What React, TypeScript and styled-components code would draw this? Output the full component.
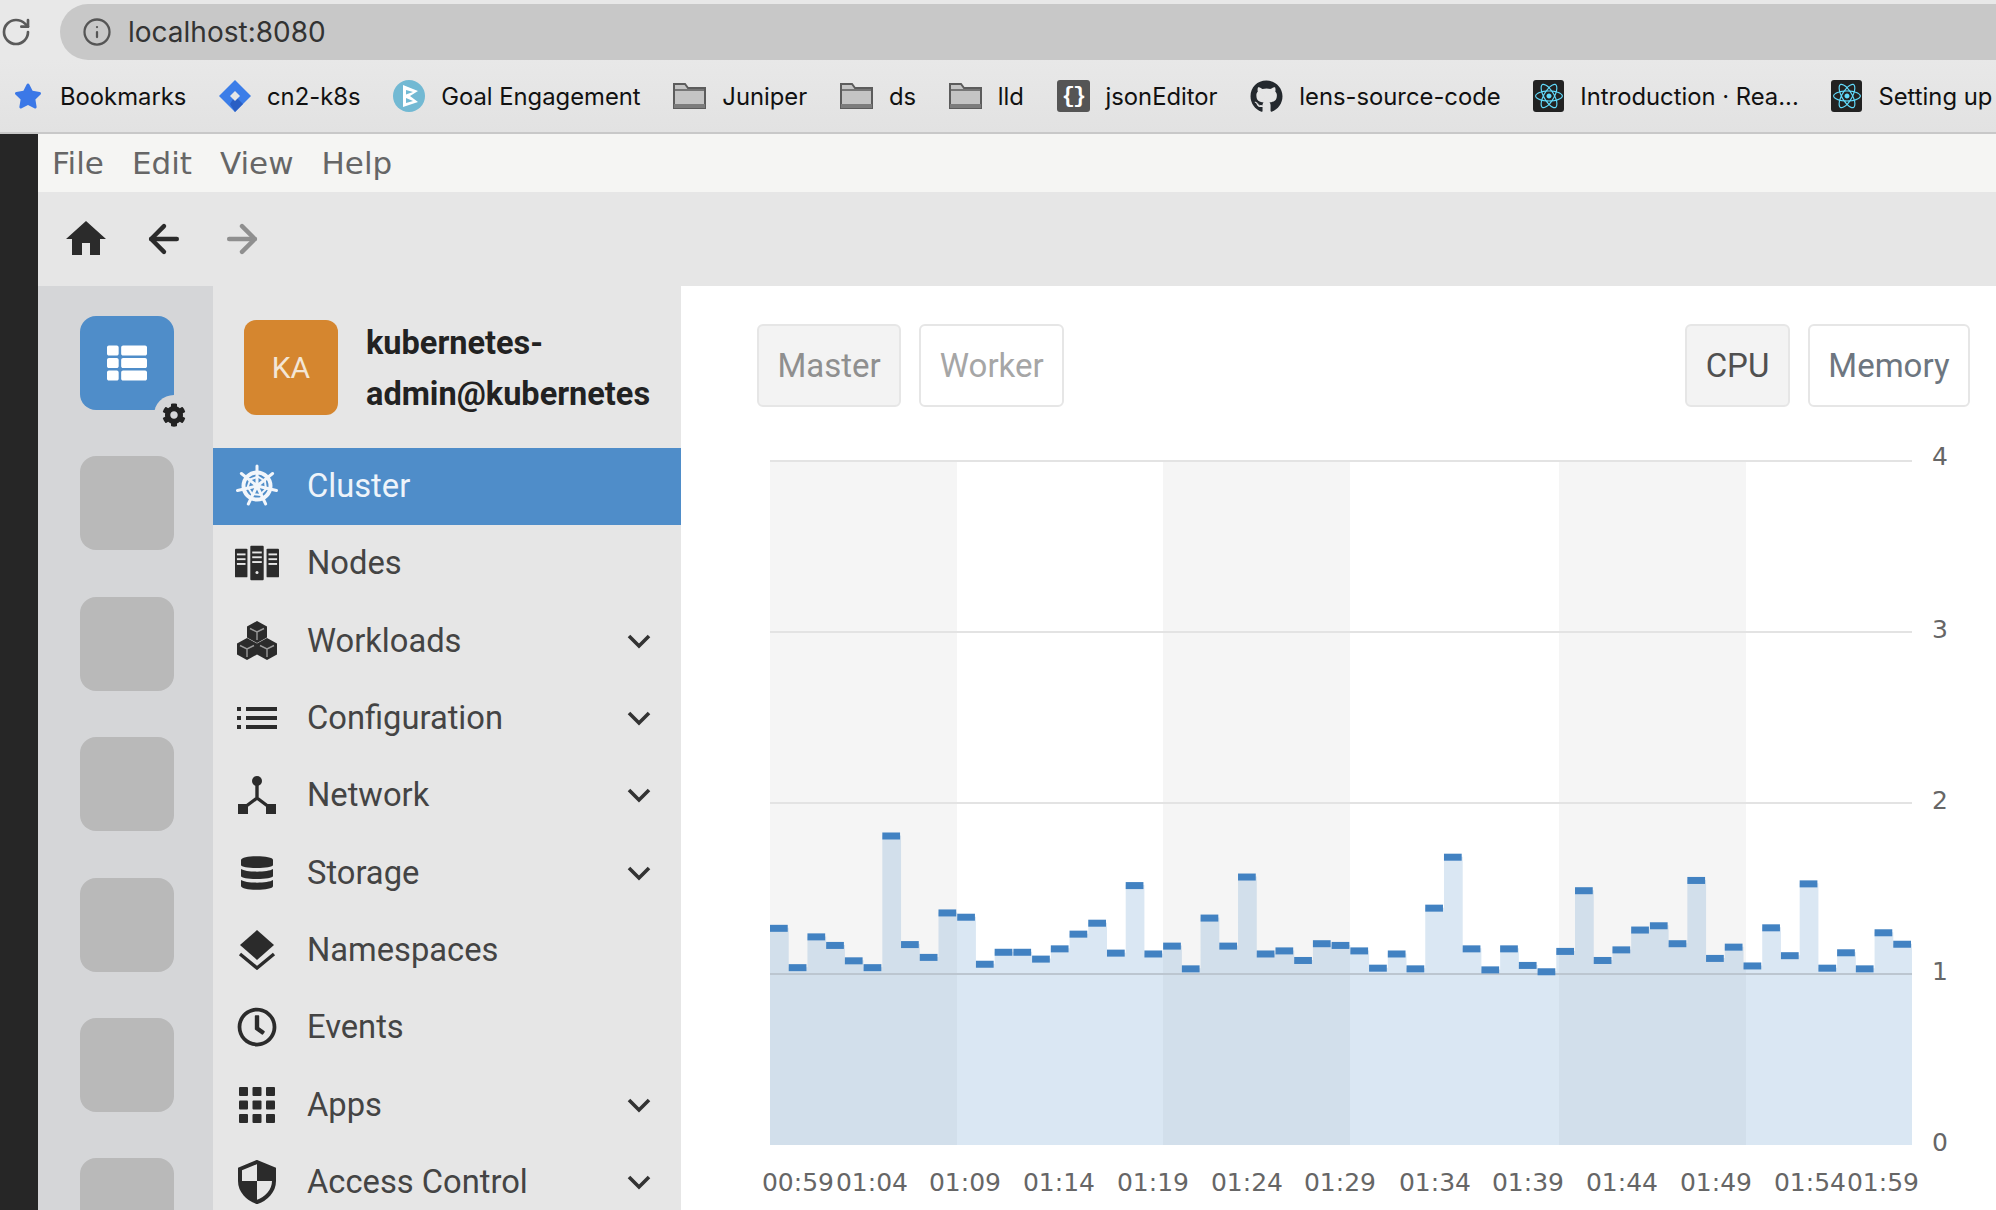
import React from 'react';
import styled, { createGlobalStyle } from 'styled-components';
import { ArrowLeft, ArrowRight, Info, RotateCw } from 'lucide-react';
import { FaCog, FaGithub, FaReact, FaRegClock, FaStar, FaThList } from 'react-icons/fa';
import { MdHome } from 'react-icons/md';

const GlobalStyle = createGlobalStyle`
  html, body {
    margin: 0;
    padding: 0;
    background: #fff;
  }
`;

const Page = styled.div`
  width: 1996px;
  height: 1210px;
  overflow: hidden;
  display: flex;
  flex-direction: column;
  font-family: 'Roboto', sans-serif;
`;

/* browser chrome */
const AddressRow = styled.div`
  height: 60px;
  box-sizing: border-box;
  padding-top: 4px;
  display: flex;
  background: #e8e8e8;
`;

const Reload = styled.div`
  width: 60px;
  height: 56px;
  display: flex;
  align-items: center;
  color: #5a5a5a;
`;

const AddressBar = styled.div`
  flex: 1;
  display: flex;
  align-items: center;
  gap: 16px;
  padding-left: 22px;
  background: #c8c8c8;
  border-radius: 28px 0 0 28px;
  font-family: 'Inter', sans-serif;
  font-size: 28px;
  color: #333;
`;

const BookmarkBar = styled.div`
  height: 72px;
  display: flex;
  align-items: center;
  gap: 32.7px;
  padding-left: 14px;
  white-space: nowrap;
  overflow: hidden;
  background: linear-gradient(#e8e8e8, #e2e2e2);
  border-bottom: 2px solid #c8c8c8;
`;

const Bookmark = styled.div<{ $wide?: boolean }>`
  display: flex;
  align-items: center;
  gap: ${(p) => (p.$wide ? '18px' : '16px')};
  flex-shrink: 0;
  font-family: 'Inter', sans-serif;
  font-size: 23.8px;
  color: #111;
`;

const JsonTile = styled.span`
  width: 33px;
  height: 32px;
  border-radius: 3px;
  background: #555;
  color: #fff;
  display: flex;
  align-items: center;
  justify-content: center;
  font-family: 'Liberation Mono', monospace;
  font-size: 22px;
  font-weight: 700;
  letter-spacing: -2px;
`;

const ReactTile = styled.span`
  width: 31px;
  height: 32px;
  border-radius: 3px;
  background: #222;
  color: #61dafb;
  display: flex;
  align-items: center;
  justify-content: center;
`;

/* app */
const AppBody = styled.div`
  flex: 1;
  min-height: 0;
  display: flex;
`;

const DarkEdge = styled.div`
  width: 38px;
  background: #262626;
`;

const AppColumn = styled.div`
  flex: 1;
  min-width: 0;
  display: flex;
  flex-direction: column;
`;

const MenuBar = styled.div`
  height: 58px;
  display: flex;
  align-items: center;
  gap: 28px;
  padding-left: 14px;
  background: #f5f5f3;
  font-family: 'DejaVu Sans', sans-serif;
  font-size: 31px;
  color: #666;
`;

const NavBar = styled.div`
  height: 94px;
  display: flex;
  align-items: center;
  padding-left: 9px;
  background: #e6e6e6;
`;

const NavButton = styled.div<{ $disabled?: boolean }>`
  width: 78px;
  display: flex;
  justify-content: center;
  color: ${(p) => (p.$disabled ? '#8f8f8f' : '#2b2b2b')};
`;

const Workspace = styled.div`
  flex: 1;
  min-height: 0;
  display: flex;
`;

const Rail = styled.div`
  width: 175px;
  box-sizing: border-box;
  padding: 30px 0 0 42px;
  display: flex;
  flex-direction: column;
  gap: 46.4px;
  overflow: hidden;
  background: #d5d6d8;
`;

const RailTile = styled.div<{ $active?: boolean }>`
  position: relative;
  width: 94px;
  height: 94px;
  flex-shrink: 0;
  border-radius: 16px;
  display: flex;
  align-items: center;
  justify-content: center;
  color: #fff;
  background: ${(p) => (p.$active ? '#4f8dc9' : '#b9b9b9')};
`;

const GearBadge = styled.span`
  position: absolute;
  right: -20px;
  bottom: -25px;
  width: 40px;
  height: 40px;
  border-radius: 50%;
  background: #d5d6d8;
  color: #222;
  display: flex;
  align-items: center;
  justify-content: center;
`;

const Sidebar = styled.div`
  width: 468px;
  overflow: hidden;
  background: #e6e6e6;
`;

const SidebarHeader = styled.div`
  height: 161.5px;
  box-sizing: border-box;
  padding: 34px 0 0 31px;
  display: flex;
  gap: 28px;
`;

const Avatar = styled.div`
  width: 94px;
  height: 95px;
  flex-shrink: 0;
  border-radius: 12px;
  background: #d5862f;
  color: #f3e6d6;
  display: flex;
  align-items: center;
  justify-content: center;
  font-size: 30px;
`;

const ClusterName = styled.div`
  margin-top: -2px;
  font-size: 32.5px;
  font-weight: 700;
  line-height: 51px;
  color: #222;
`;

const NavRow = styled.div<{ $active?: boolean }>`
  height: 77.3px;
  display: flex;
  align-items: center;
  padding: 0 30px 0 22px;
  font-size: 32.7px;
  color: ${(p) => (p.$active ? '#eef4fa' : '#444')};
  background: ${(p) => (p.$active ? '#4f8dc9' : 'transparent')};
`;

const NavIcon = styled.span<{ $active?: boolean }>`
  width: 44px;
  height: 44px;
  display: flex;
  align-items: center;
  justify-content: center;
  color: ${(p) => (p.$active ? '#f2f6fb' : '#2b2b2b')};
`;

const NavLabel = styled.span`
  flex: 1;
  margin-left: 28px;
`;

const Main = styled.div`
  flex: 1;
  min-width: 0;
  display: flex;
  flex-direction: column;
  background: #fff;
`;

const ButtonRow = styled.div`
  display: flex;
  justify-content: space-between;
  padding: 38px 26px 0 76px;
`;

const ButtonGroup = styled.div`
  display: flex;
  gap: 18px;
`;

const ChartButton = styled.div<{ $selected?: boolean; $muted?: boolean }>`
  height: 83px;
  box-sizing: border-box;
  padding: 0 18.5px;
  display: flex;
  align-items: center;
  border: 2px solid #e6e6e6;
  border-radius: 6px;
  font-size: 33px;
  background: ${(p) => (p.$selected ? '#f3f3f3' : '#fff')};
  color: ${(p) => {
    if (p.$muted) return p.$selected ? '#8f8f8f' : '#a6a6a6';
    return p.$selected ? '#505050' : '#6d7680';
  }};
`;

const ChartFrame = styled.div`
  margin-top: 13px;
  height: 790px;
`;

const AxisText = styled.text`
  font-family: 'DejaVu Sans', sans-serif;
  font-size: 25px;
  fill: #666;
`;

/* custom drawings */
function KubeWheel() {
  const spokes = [0, 51.4, 102.8, 154.3, 205.7, 257.1, 308.6];
  return (
    <svg width="44" height="44" viewBox="0 0 44 44" fill="none" stroke="currentColor">
      <circle cx="22" cy="22" r="13.5" strokeWidth="4" />
      <circle cx="22" cy="22" r="3.5" fill="currentColor" strokeWidth="0" />
      {spokes.map((a) => (
        <g key={a} transform={`rotate(${a} 22 22)`}>
          <line x1="22" y1="22" x2="22" y2="2" strokeWidth="3" strokeLinecap="round" />
          <line x1="22" y1="12" x2="30" y2="17" strokeWidth="2" />
        </g>
      ))}
    </svg>
  );
}

function ServerRacks() {
  const lights = (x: number, y: number, w: number) => (
    <g stroke="#e6e6e6" strokeWidth="2">
      <line x1={x + 2} y1={y + 6} x2={x + w - 2} y2={y + 6} />
      <line x1={x + 2} y1={y + 11} x2={x + w - 2} y2={y + 11} />
      <line x1={x + 2} y1={y + 16} x2={x + w - 2} y2={y + 16} />
    </g>
  );
  return (
    <svg width="46" height="36" viewBox="0 0 46 36" fill="currentColor">
      <rect x="0" y="3" width="13" height="30" rx="1" />
      <rect x="16" y="0" width="14" height="36" rx="1" />
      <rect x="33" y="3" width="13" height="30" rx="1" />
      {lights(0, 3, 13)}
      {lights(16, 1, 14)}
      {lights(33, 3, 13)}
      <circle cx="23" cy="28" r="1.6" fill="#e6e6e6" />
    </svg>
  );
}

function CubesIcon() {
  const cube = (cx: number, cy: number) => (
    <g key={`${cx}-${cy}`}>
      <polygon
        points={`${cx},${cy - 11} ${cx + 10},${cy - 5.5} ${cx + 10},${cy + 5.5} ${cx},${cy + 11} ${cx - 10},${cy + 5.5} ${cx - 10},${cy - 5.5}`}
        fill="currentColor"
      />
      <path
        d={`M${cx - 7} ${cy - 3.5}L${cx} ${cy}L${cx + 7} ${cy - 3.5}M${cx} ${cy}V${cy + 8}`}
        fill="none"
        stroke="#9a9a9a"
        strokeWidth="1.4"
      />
    </g>
  );
  return (
    <svg width="40" height="40" viewBox="0 0 40 40">
      {cube(20, 11)}
      {cube(10, 28)}
      {cube(30, 28)}
    </svg>
  );
}

function ListIcon() {
  return (
    <svg width="40" height="24" viewBox="0 0 40 24" fill="currentColor">
      <rect x="0" y="1" width="4" height="4" />
      <rect x="0" y="10" width="4" height="4" />
      <rect x="0" y="19" width="4" height="4" />
      <rect x="9" y="1" width="31" height="4" />
      <rect x="9" y="10" width="31" height="4" />
      <rect x="9" y="19" width="31" height="4" />
    </svg>
  );
}

function NetworkIcon() {
  return (
    <svg width="40" height="38" viewBox="0 0 40 38" fill="currentColor">
      <circle cx="20" cy="5" r="5" />
      <path d="M20 8v14M20 22L8 31M20 22l12 9" fill="none" stroke="currentColor" strokeWidth="3.4" />
      <rect x="1" y="28" width="10" height="10" />
      <rect x="29" y="28" width="10" height="10" />
    </svg>
  );
}

function StorageIcon() {
  return (
    <svg width="32" height="38" viewBox="0 0 32 38" fill="currentColor">
      <path d="M0 6C0 1 32 1 32 6V11C32 15 0 15 0 11Z" />
      <path d="M0 15C5 18.5 27 18.5 32 15V22C32 26 0 26 0 22Z" />
      <path d="M0 26C5 29.5 27 29.5 32 26V32C32 37 0 37 0 32Z" />
    </svg>
  );
}

function NamespaceIcon() {
  return (
    <svg width="38" height="40" viewBox="0 0 38 40" fill="currentColor">
      <polygon points="19,0 36,15 19,30 2,15" />
      <polyline points="2,24 19,38 36,24" fill="none" stroke="currentColor" strokeWidth="3.4" />
    </svg>
  );
}

function AppsGrid() {
  const cells = [0, 13.5, 27];
  return (
    <svg width="36" height="36" viewBox="0 0 36 36" fill="currentColor">
      {cells.map((y) => cells.map((x) => <rect key={`${x}-${y}`} x={x} y={y} width="9" height="9" rx="1" />))}
    </svg>
  );
}

function ShieldIcon() {
  return (
    <svg width="40" height="44" viewBox="0 0 40 44">
      <path d="M20 2L37 9V21C37 31 29 39 20 42C11 39 3 31 3 21V9Z" fill="none" stroke="currentColor" strokeWidth="4" />
      <path d="M20 2L37 9V21H20Z" fill="currentColor" />
      <path d="M20 21V42C11 39 3 31 3 21Z" fill="currentColor" />
    </svg>
  );
}

function Chevron() {
  return (
    <svg width="24" height="16" viewBox="0 0 24 16" fill="none" stroke="#333" strokeWidth="3.6">
      <polyline points="2,3 12,13 22,3" />
    </svg>
  );
}

function JiraMark() {
  return (
    <svg width="32" height="32" viewBox="0 0 32 32">
      <polygon points="16,0 32,16 16,32 0,16" fill="#3b7de8" />
      <polygon points="16,16 24,24 16,32 11,24" fill="#2a5fc4" />
      <polygon points="16,11 21,16 16,21 11,16" fill="#e6e6e6" />
    </svg>
  );
}

function GoalMark() {
  return (
    <svg width="32" height="32" viewBox="0 0 32 32">
      <circle cx="16" cy="16" r="16" fill="#72b9d3" />
      <polygon points="10,5 25,11 17,16 25,22 10,27" fill="#fff" />
      <polygon points="13,10 20,12 13,14.5" fill="#72b9d3" />
      <polygon points="13,18 20,21 13,23" fill="#72b9d3" />
    </svg>
  );
}

function FolderIcon() {
  return (
    <svg width="33" height="26" viewBox="0 0 33 26">
      <path d="M1 25V1h11l3 4h17v20z" fill="#c4c4c4" stroke="#5c5c5c" strokeWidth="2" />
      <line x1="1" y1="7" x2="32" y2="7" stroke="#5c5c5c" strokeWidth="1.5" />
      <rect x="1" y="21" width="31" height="4" fill="#7c7c7c" />
    </svg>
  );
}

/* data */
const CPU_VALUES = [
  1.27, 1.04, 1.22, 1.17, 1.08, 1.04, 1.81, 1.175, 1.1, 1.36, 1.335, 1.06, 1.13, 1.13, 1.09, 1.15,
  1.236, 1.3, 1.125, 1.52, 1.12, 1.166, 1.033, 1.33, 1.166, 1.57, 1.12, 1.138, 1.082, 1.18, 1.17,
  1.138, 1.037, 1.12, 1.033, 1.388, 1.686, 1.15, 1.027, 1.15, 1.053, 1.016, 1.135, 1.49, 1.082,
  1.144, 1.26, 1.285, 1.18, 1.55, 1.094, 1.16, 1.05, 1.273, 1.11, 1.53, 1.037, 1.127, 1.033, 1.244,
  1.177,
];

const X_LABELS: [string, number][] = [
  ['00:59', 798], ['01:04', 872], ['01:09', 965], ['01:14', 1059], ['01:19', 1153], ['01:24', 1247], ['01:29', 1340],
  ['01:34', 1435], ['01:39', 1528], ['01:44', 1622], ['01:49', 1716], ['01:54', 1810], ['01:59', 1883],
];

const CHART_LEFT = 770;
const CHART_RIGHT = 1912;
const BASE_Y = 1145;
const UNIT = 171;
const BAR_WIDTH = (CHART_RIGHT - CHART_LEFT) / CPU_VALUES.length;

const toY = (v: number) => BASE_Y - v * UNIT;

function CpuChart() {
  const area =
    `M${CHART_LEFT} ${BASE_Y}` +
    CPU_VALUES.map((v, i) => `V${toY(v)}H${CHART_LEFT + (i + 1) * BAR_WIDTH}`).join('') +
    `V${BASE_Y}Z`;
  return (
    <svg width="1315" height="790" viewBox="681 420 1315 790">
      {[770, 1163, 1559].map((x) => (
        <rect key={x} x={x} y={461} width={187} height={BASE_Y - 461} fill="#f5f5f5" />
      ))}
      {[4, 3, 2].map((v) => (
        <line key={v} x1={CHART_LEFT} x2={CHART_RIGHT} y1={toY(v)} y2={toY(v)} stroke="#e3e3e3" strokeWidth="2" />
      ))}
      <path d={area} fill="rgba(72,135,195,0.2)" />
      <line x1={CHART_LEFT} x2={CHART_RIGHT} y1={toY(1)} y2={toY(1)} stroke="#bcc6d0" strokeWidth="2" />
      {CPU_VALUES.map((v, i) => (
        <rect key={i} x={CHART_LEFT + i * BAR_WIDTH} y={toY(v) - 3} width={BAR_WIDTH - 1} height={7} fill="#4282c2" />
      ))}
      {[0, 1, 2, 3, 4].map((v) => (
        <AxisText key={v} x={1940} y={toY(v) + (v === 4 ? 4 : 6)} textAnchor="middle">
          {v}
        </AxisText>
      ))}
      {X_LABELS.map(([label, x]) => (
        <AxisText key={label} x={x} y={1191} textAnchor="middle">
          {label}
        </AxisText>
      ))}
    </svg>
  );
}

const NAV_ITEMS: { label: string; icon: React.ReactNode; more?: boolean; active?: boolean }[] = [
  { label: 'Cluster', icon: <KubeWheel />, active: true },
  { label: 'Nodes', icon: <ServerRacks /> },
  { label: 'Workloads', icon: <CubesIcon />, more: true },
  { label: 'Configuration', icon: <ListIcon />, more: true },
  { label: 'Network', icon: <NetworkIcon />, more: true },
  { label: 'Storage', icon: <StorageIcon />, more: true },
  { label: 'Namespaces', icon: <NamespaceIcon /> },
  { label: 'Events', icon: <FaRegClock size={40} /> },
  { label: 'Apps', icon: <AppsGrid />, more: true },
  { label: 'Access Control', icon: <ShieldIcon />, more: true },
];

export default function App() {
  return (
    <Page>
      <GlobalStyle />
      <AddressRow>
        <Reload>
          <RotateCw size={32} strokeWidth={2} />
        </Reload>
        <AddressBar>
          <Info size={30} strokeWidth={1.8} color="#555" />
          localhost:8080
        </AddressBar>
      </AddressRow>
      <BookmarkBar>
        <Bookmark $wide>
          <FaStar size={28} color="#3b78e7" />
          Bookmarks
        </Bookmark>
        <Bookmark>
          <JiraMark />
          cn2-k8s
        </Bookmark>
        <Bookmark>
          <GoalMark />
          Goal Engagement
        </Bookmark>
        <Bookmark>
          <FolderIcon />
          Juniper
        </Bookmark>
        <Bookmark>
          <FolderIcon />
          ds
        </Bookmark>
        <Bookmark>
          <FolderIcon />
          lld
        </Bookmark>
        <Bookmark>
          <JsonTile>{'{}'}</JsonTile>
          jsonEditor
        </Bookmark>
        <Bookmark>
          <FaGithub size={33} color="#24292e" />
          lens-source-code
        </Bookmark>
        <Bookmark>
          <ReactTile>
            <FaReact size={28} />
          </ReactTile>
          Introduction · Rea...
        </Bookmark>
        <Bookmark>
          <ReactTile>
            <FaReact size={28} />
          </ReactTile>
          Setting up
        </Bookmark>
      </BookmarkBar>
      <AppBody>
        <DarkEdge />
        <AppColumn>
          <MenuBar>
            <span>File</span>
            <span>Edit</span>
            <span>View</span>
            <span>Help</span>
          </MenuBar>
          <NavBar>
            <NavButton>
              <MdHome size={48} />
            </NavButton>
            <NavButton>
              <ArrowLeft size={44} strokeWidth={2.4} />
            </NavButton>
            <NavButton $disabled>
              <ArrowRight size={44} strokeWidth={2.4} />
            </NavButton>
          </NavBar>
          <Workspace>
            <Rail>
              <RailTile $active>
                <FaThList size={40} />
                <GearBadge>
                  <FaCog size={24} />
                </GearBadge>
              </RailTile>
              {[1, 2, 3, 4, 5, 6].map((n) => (
                <RailTile key={n} />
              ))}
            </Rail>
            <Sidebar>
              <SidebarHeader>
                <Avatar>KA</Avatar>
                <ClusterName>
                  kubernetes-
                  <br />
                  admin@kubernetes
                </ClusterName>
              </SidebarHeader>
              {NAV_ITEMS.map((item) => (
                <NavRow key={item.label} $active={item.active}>
                  <NavIcon $active={item.active}>{item.icon}</NavIcon>
                  <NavLabel>{item.label}</NavLabel>
                  {item.more && <Chevron />}
                </NavRow>
              ))}
            </Sidebar>
            <Main>
              <ButtonRow>
                <ButtonGroup>
                  <ChartButton $selected $muted>
                    Master
                  </ChartButton>
                  <ChartButton $muted>Worker</ChartButton>
                </ButtonGroup>
                <ButtonGroup>
                  <ChartButton $selected>CPU</ChartButton>
                  <ChartButton>Memory</ChartButton>
                </ButtonGroup>
              </ButtonRow>
              <ChartFrame>
                <CpuChart />
              </ChartFrame>
            </Main>
          </Workspace>
        </AppColumn>
      </AppBody>
    </Page>
  );
}
